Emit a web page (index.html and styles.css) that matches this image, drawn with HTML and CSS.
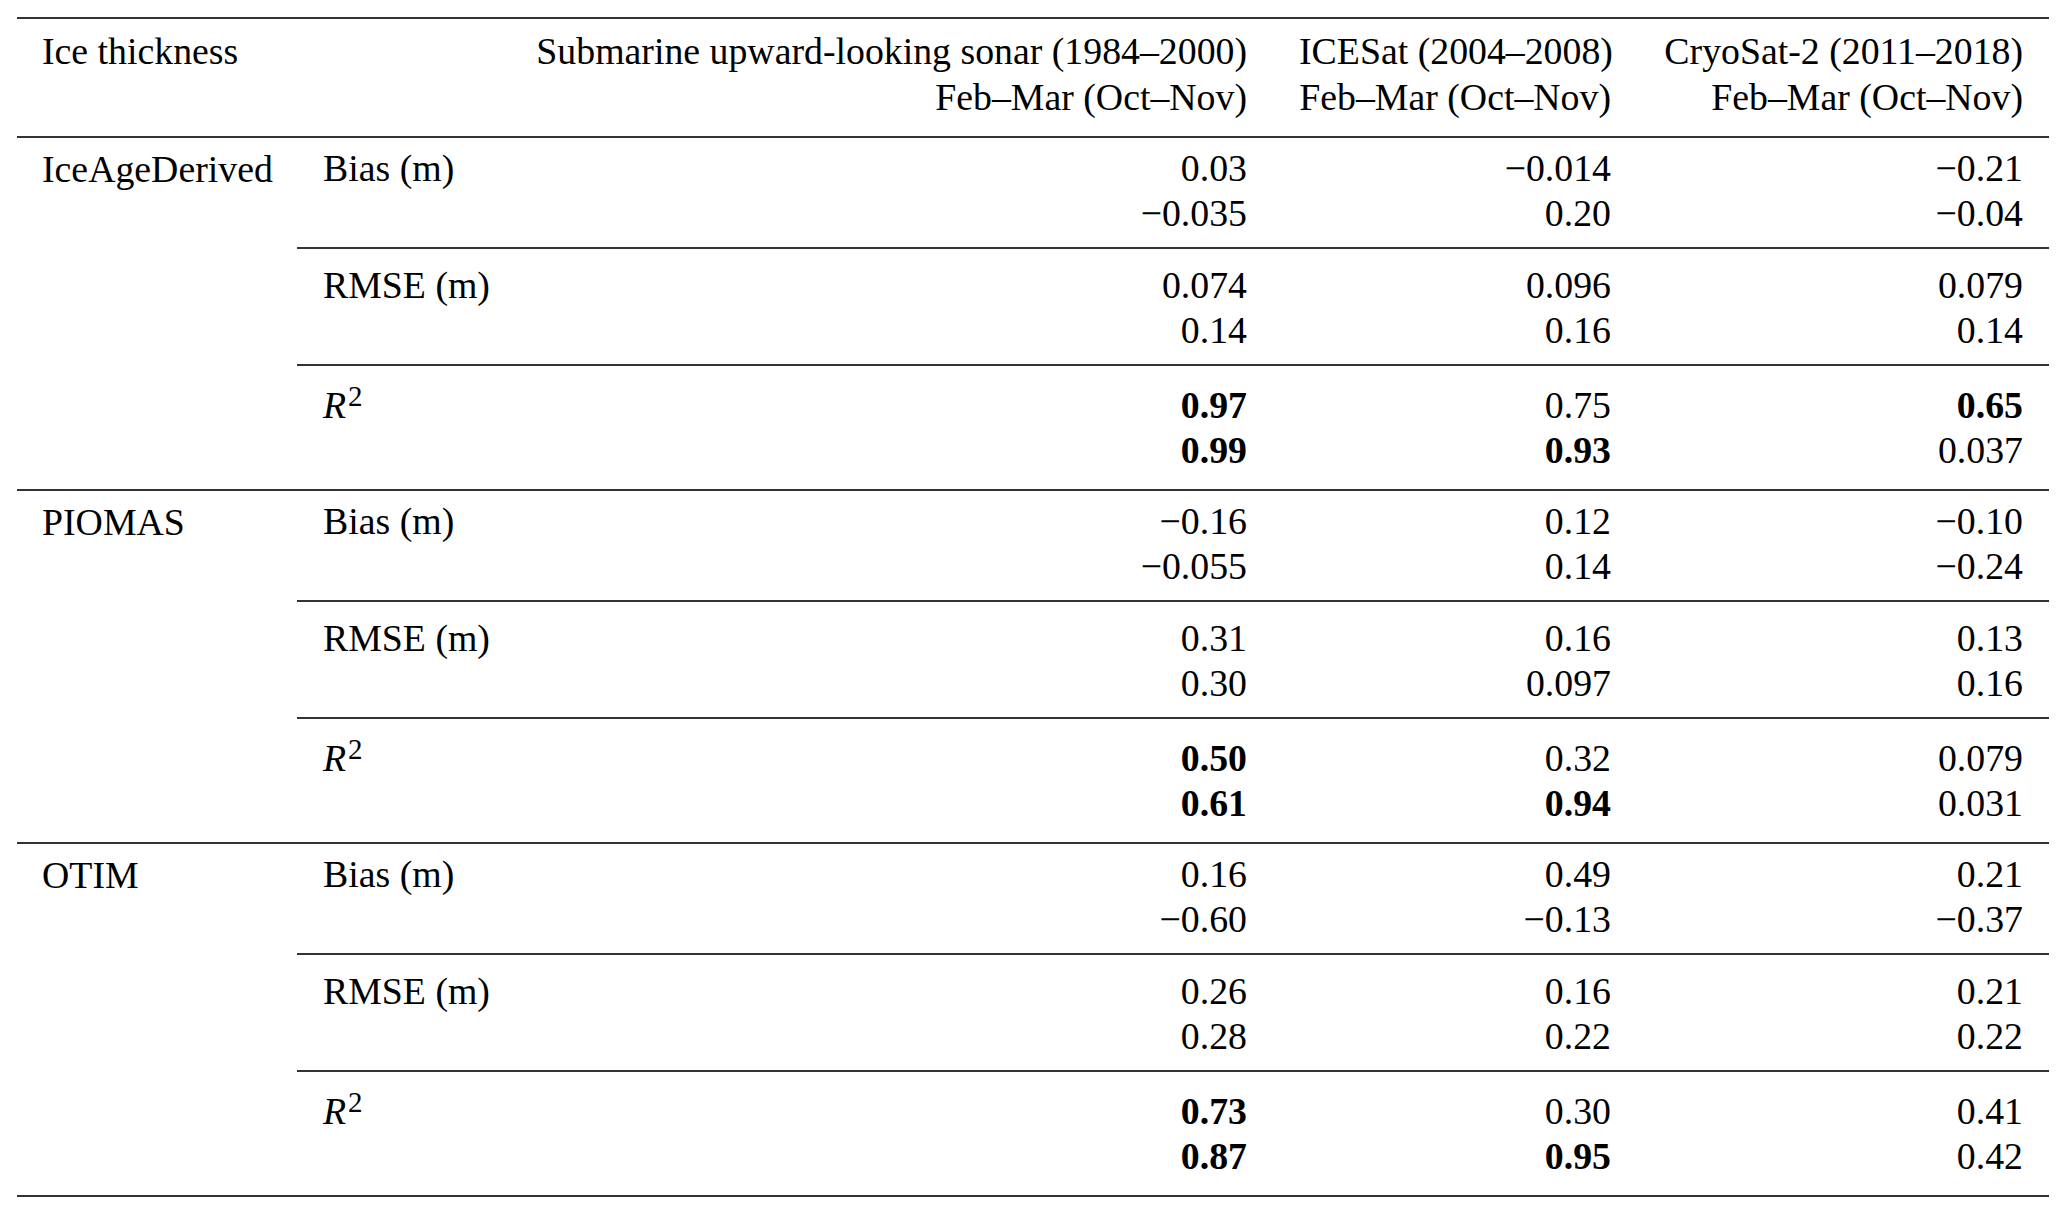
FILE: index.html
```html
<!DOCTYPE html>
<html>
<head>
<meta charset="utf-8">
<title>Ice thickness</title>
<link rel="stylesheet" href="styles.css">
</head>
<body>
<table class="tbl">
  <colgroup>
    <col class="c-model">
    <col class="c-metric">
    <col class="c-sonar">
    <col class="c-icesat">
    <col class="c-cryo">
  </colgroup>
  <thead>
    <tr>
      <th class="h-left" colspan="2">Ice thickness</th>
      <th class="h-right"><div>Submarine upward-looking sonar (1984–2000)</div><div>Feb–Mar (Oct–Nov)</div></th>
      <th class="h-right"><div>ICESat (2004–2008)</div><div>Feb–Mar (Oct–Nov)</div></th>
      <th class="h-right"><div>CryoSat-2 (2011–2018)</div><div>Feb–Mar (Oct–Nov)</div></th>
    </tr>
  </thead>
  <tbody>
    <tr class="bias">
      <td class="model" rowspan="3">IceAgeDerived</td>
      <td class="metric">Bias (m)</td>
      <td class="num"><div>0.03</div><div>−0.035</div></td>
      <td class="num"><div>−0.014</div><div>0.20</div></td>
      <td class="num"><div>−0.21</div><div>−0.04</div></td>
    </tr>
    <tr class="rmse">
      <td class="metric">RMSE (m)</td>
      <td class="num"><div>0.074</div><div>0.14</div></td>
      <td class="num"><div>0.096</div><div>0.16</div></td>
      <td class="num"><div>0.079</div><div>0.14</div></td>
    </tr>
    <tr class="r2">
      <td class="metric"><i>R</i><sup>2</sup></td>
      <td class="num"><div><b>0.97</b></div><div><b>0.99</b></div></td>
      <td class="num"><div>0.75</div><div><b>0.93</b></div></td>
      <td class="num"><div><b>0.65</b></div><div>0.037</div></td>
    </tr>

    <tr class="bias">
      <td class="model" rowspan="3">PIOMAS</td>
      <td class="metric">Bias (m)</td>
      <td class="num"><div>−0.16</div><div>−0.055</div></td>
      <td class="num"><div>0.12</div><div>0.14</div></td>
      <td class="num"><div>−0.10</div><div>−0.24</div></td>
    </tr>
    <tr class="rmse">
      <td class="metric">RMSE (m)</td>
      <td class="num"><div>0.31</div><div>0.30</div></td>
      <td class="num"><div>0.16</div><div>0.097</div></td>
      <td class="num"><div>0.13</div><div>0.16</div></td>
    </tr>
    <tr class="r2">
      <td class="metric"><i>R</i><sup>2</sup></td>
      <td class="num"><div><b>0.50</b></div><div><b>0.61</b></div></td>
      <td class="num"><div>0.32</div><div><b>0.94</b></div></td>
      <td class="num"><div>0.079</div><div>0.031</div></td>
    </tr>

    <tr class="bias">
      <td class="model" rowspan="3">OTIM</td>
      <td class="metric">Bias (m)</td>
      <td class="num"><div>0.16</div><div>−0.60</div></td>
      <td class="num"><div>0.49</div><div>−0.13</div></td>
      <td class="num"><div>0.21</div><div>−0.37</div></td>
    </tr>
    <tr class="rmse">
      <td class="metric">RMSE (m)</td>
      <td class="num"><div>0.26</div><div>0.28</div></td>
      <td class="num"><div>0.16</div><div>0.22</div></td>
      <td class="num"><div>0.21</div><div>0.22</div></td>
    </tr>
    <tr class="r2">
      <td class="metric"><i>R</i><sup>2</sup></td>
      <td class="num"><div><b>0.73</b></div><div><b>0.87</b></div></td>
      <td class="num"><div>0.30</div><div><b>0.95</b></div></td>
      <td class="num"><div>0.41</div><div>0.42</div></td>
    </tr>
  </tbody>
</table>
</body>
</html>
```

FILE: styles.css
```css
html, body {
  margin: 0;
  padding: 0;
  background: #ffffff;
}

body {
  padding: 17px 0 0 17px;
  font-family: "Liberation Serif", "Times New Roman", serif;
  font-size: 37.8px;
  line-height: 45px;
  color: #000000;
}

.tbl {
  width: 2032px;
  table-layout: fixed;
  border-collapse: separate;
  border-spacing: 0;
}

.c-model  { width: 280px; }
.c-metric { width: 213px; }
.c-sonar  { width: 763px; }
.c-icesat { width: 364px; }
.c-cryo   { width: 412px; }

.tbl th,
.tbl td {
  padding: 0 26px;
  vertical-align: top;
  white-space: nowrap;
}

.tbl th {
  font-weight: normal;
  line-height: 46px;
  border-top: 2px solid #333333;
  border-bottom: 2px solid #333333;
  padding-top: 9px;
  padding-bottom: 16px;
}

.tbl th.h-left {
  text-align: left;
  padding-left: 25px;
}

.tbl th.h-right {
  text-align: right;
}

.tbl td {
  border-bottom: 2px solid #333333;
}

.tbl td.model {
  padding-left: 25px;
  text-align: left;
}

.tbl td.metric {
  text-align: left;
}

.tbl td.num {
  text-align: right;
}

.bias td { padding-top: 8px; padding-bottom: 11px; }
.rmse td { padding-top: 14px; padding-bottom: 11px; }
.r2 td   { padding-top: 17px; padding-bottom: 16px; }

.tbl td.model { padding-top: 9px; }

.metric i {
  font-style: italic;
}

.metric sup {
  font-size: 29px;
  line-height: 0;
  vertical-align: 12px;
  margin-left: 2px;
}

.num b {
  font-weight: bold;
}
```
